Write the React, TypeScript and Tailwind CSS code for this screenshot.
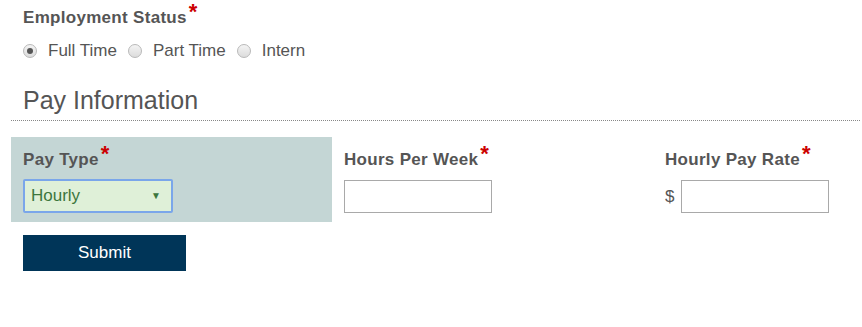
import React from 'react';

const Req = () => <span className="relative -top-[4px] ml-[2px] text-[22px] font-bold leading-[0] text-[#c00]">*</span>;

const Radio = ({ label, checked }: { label: string; checked?: boolean }) => (
  <label className="flex items-center gap-[11px]">
    <span className="flex h-[14px] w-[14px] items-center justify-center rounded-full border border-[#b9b9b9] bg-gradient-to-b from-[#f4f4f4] to-[#dcdcdc]">
      {checked && <span className="h-[6px] w-[6px] rounded-full bg-[#555]" />}
    </span>
    <span>{label}</span>
  </label>
);

export default function App() {
  return (
    <div className="h-[327px] w-[862px] bg-white font-['Liberation_Sans',Arial,sans-serif] text-[17px] text-[#555]">
      <div className="px-[23px] pt-[7px]">
        <div className="font-bold leading-[22px] tracking-[0.3px]">
          Employment Status<Req />
        </div>
        <div className="mt-[12px] flex items-center gap-[11px] leading-[20px]">
          <Radio label="Full Time" checked />
          <Radio label="Part Time" />
          <Radio label="Intern" />
        </div>
        <h2 className="mt-[24px] text-[25px] leading-[30px]">Pay Information</h2>
      </div>
      <div className="ml-[11px] mt-[5px] w-[849px] border-b border-dotted border-[#888]" />
      <div className="ml-[11px] mt-[16px] flex">
        <div className="w-[321px] bg-[#c4d6d5] px-[12px] pb-[9px] pt-[12px]">
          <div className="font-bold leading-[22px] tracking-[0.3px]">
            Pay Type<Req />
          </div>
          <div className="mt-[8px] flex h-[34px] w-[150px] items-center justify-between rounded-[2px] border-2 border-[#7aa6ea] bg-[#dff0d8] pl-[6px] pr-[10px] text-[#3c763d]">
            <span>Hourly</span>
            <span className="text-[10px] leading-none">▼</span>
          </div>
        </div>
        <div className="w-[321px] px-[12px] pt-[12px]">
          <div className="font-bold leading-[22px] tracking-[0.3px]">
            Hours Per Week<Req />
          </div>
          <div className="mt-[9px] h-[33px] w-[148px] border border-[#a9a9a9] bg-white" />
        </div>
        <div className="px-[12px] pt-[12px]">
          <div className="font-bold leading-[22px] tracking-[0.3px]">
            Hourly Pay Rate<Req />
          </div>
          <div className="mt-[9px] flex items-center gap-[7px]">
            <span>$</span>
            <div className="h-[33px] w-[148px] border border-[#a9a9a9] bg-white" />
          </div>
        </div>
      </div>
      <button className="ml-[23px] mt-[13px] h-[36px] w-[163px] bg-[#003558] text-[17px] text-white">Submit</button>
    </div>
  );
}
